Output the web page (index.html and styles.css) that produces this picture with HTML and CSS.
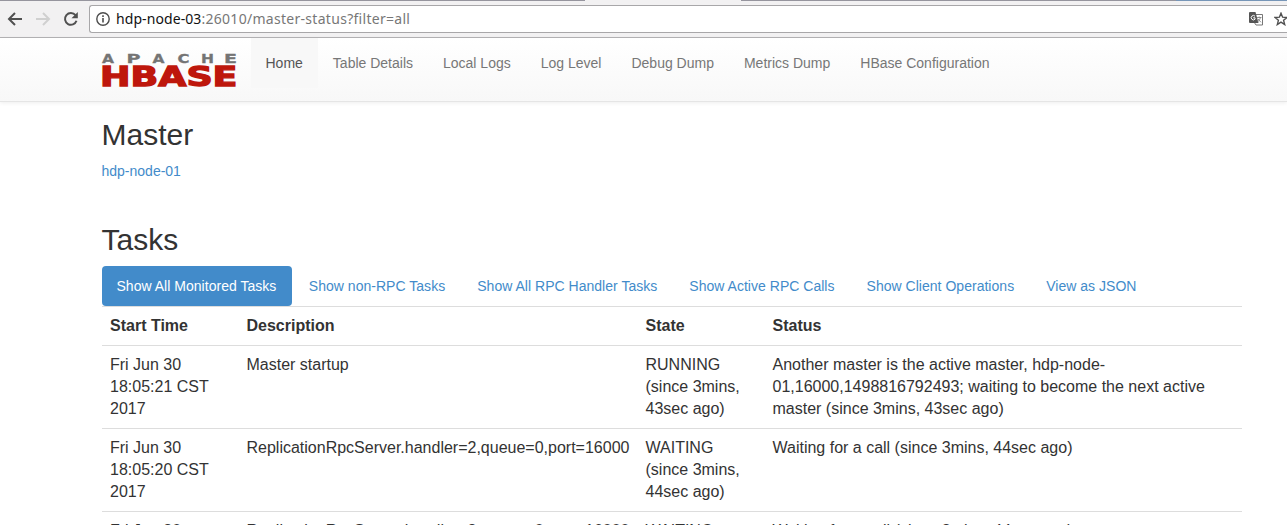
FILE: index.html
```
<!DOCTYPE html>
<html lang="en">
<head>
<meta charset="utf-8">
<title>Master: hdp-node-03</title>
<link rel="stylesheet" href="styles.css">
</head>
<body>
<div class="browser">
  <div class="tabstrip"><i class="edge left"></i><i class="edge mid"></i><i class="edge right"></i></div>
  <div class="toolbar">
    <svg class="controls" width="89" height="34" viewBox="0 3 89 34" fill="none" stroke-width="2">
      <path d="M22 19H9.500M15 13L9 19L15 25" stroke="#505050"/>
      <path d="M36 19H48.500M43 13L49 19L43 25" stroke="#d0d0d0"/>
      <path d="M75.500 15.200A5.900 5.900 0 1 0 76.500 20.800" stroke="#505050"/>
      <path d="M77.800 12V18.300H71.500Z" fill="#505050"/>
    </svg>
    <div class="address">
      <svg width="14" height="14" viewBox="0 0 14 14" fill="none" stroke="#4d4d4d"><circle cx="7" cy="7" r="6.200" stroke-width="1.400"/><path d="M7 6V10.500M7 3.300V4.900" stroke-width="1.600"/></svg>
      <span class="url"><b>hdp-node-03</b>:26010/master-status?filter=all</span>
      <svg class="translate" width="14" height="14" viewBox="0 0 14 14"><path d="M6 2.500H13.500V13H7L5 10" fill="#fff" stroke="#777"/><path d="M1 0H6.500L9.500 11H1Q0 11 0 10V1Q0 0 1 0Z" fill="#555"/><path d="M6 4.200A2.200 2.200 0 1 0 6 7.200V5.800H4.200" fill="none" stroke="#fff"/><path d="M8 5.500H12.500M10.200 4.500V5.500M11.500 5.500Q11 8 8.500 10M9 7L12 10.300" fill="none" stroke="#777" stroke-width=".8"/></svg>
      <svg class="star" width="14" height="14" viewBox="0 0 14 14"><path d="M7 1.200L8.600 5.200L13 5.500L9.600 8.300L10.700 12.600L7 10.200L3.300 12.600L4.400 8.300L1 5.500L5.400 5.200Z" fill="none" stroke="#505050" stroke-width="1.400"/></svg>
    </div>
  </div>
</div>
<header class="navbar">
  <div class="container nav">
    <svg class="logo" width="135" height="34" viewBox="0 0 135 34">
      <g class="apache"><text x="0" y="9.500" textLength="12" lengthAdjust="spacingAndGlyphs">A</text><text x="24.500" y="9.500" textLength="14" lengthAdjust="spacingAndGlyphs">P</text><text x="50.500" y="9.500" textLength="12" lengthAdjust="spacingAndGlyphs">A</text><text x="75.500" y="9.500" textLength="12" lengthAdjust="spacingAndGlyphs">C</text><text x="99" y="9.500" textLength="13" lengthAdjust="spacingAndGlyphs">H</text><text x="122" y="9.500" textLength="13" lengthAdjust="spacingAndGlyphs">E</text></g>
      <text class="hbase" x="-2" y="32.500" textLength="137.500" lengthAdjust="spacingAndGlyphs">HBASE</text>
    </svg>
    <nav class="links"><a class="current">Home</a><a>Table Details</a><a>Local Logs</a><a>Log Level</a><a>Debug Dump</a><a>Metrics Dump</a><a>HBase Configuration</a></nav>
  </div>
</header>
<main class="container">
  <h1>Master</h1>
  <p class="host"><a>hdp-node-01</a></p>
  <h2>Tasks</h2>
  <div class="pills"><a class="active">Show All Monitored Tasks</a><a>Show non-RPC Tasks</a><a>Show All RPC Handler Tasks</a><a>Show Active RPC Calls</a><a>Show Client Operations</a><a>View as JSON</a></div>
  <table>
    <colgroup><col class="c1"><col class="c2"><col class="c3"><col></colgroup>
    <tr><th>Start Time</th><th>Description</th><th>State</th><th>Status</th></tr>
    <tr><td>Fri Jun 30<br>18:05:21 CST<br>2017</td><td>Master startup</td><td>RUNNING<br>(since 3mins,<br>43sec ago)</td><td>Another master is the active master, hdp-node-<br>01,16000,1498816792493; waiting to become the next active<br>master (since 3mins, 43sec ago)</td></tr>
    <tr><td>Fri Jun 30<br>18:05:20 CST<br>2017</td><td>ReplicationRpcServer.handler=2,queue=0,port=16000</td><td>WAITING<br>(since 3mins,<br>44sec ago)</td><td>Waiting for a call (since 3mins, 44sec ago)</td></tr>
    <tr><td>Fri Jun 30</td><td>ReplicationRpcServer.handler=2,queue=0,port=16000</td><td>WAITING</td><td>Waiting for a call (since 3mins, 44sec ago)</td></tr>
  </table>
</main>
</body>
</html>
```
FILE: styles.css
```
* { box-sizing: border-box; }
html, body { height: 525px; overflow: hidden; }
body { margin: 0; background: #fff; color: #333; font: 14px/20px "Liberation Sans", Arial, sans-serif; }
.browser { height: 38px; background: #f2f1f2; border-bottom: 1px solid #b4b3b5; }
.tabstrip { display: flex; height: 1px; }
.edge { height: 1px; background: #96959e; }
.edge.left { width: 585px; }
.edge.mid { width: 156px; background: #f2f1f2; }
.edge.right { flex: 1; background: linear-gradient(90deg, #96959e 435px, #7796b8 435px); }
.toolbar { display: flex; height: 36px; }
.controls { flex: none; margin-top: 2px; }
.address { display: flex; flex: 1; align-items: center; height: 28px; margin-top: 4px; padding-left: 6px; background: #fff; border: 1px solid #a8a7a9; border-right: 0; border-radius: 3px 0 0 3px; }
.url { margin-left: 6px; color: #777; font: 14px/20px "Noto Sans", sans-serif; letter-spacing: .29px; white-space: nowrap; }
.url b { color: #111; font-weight: 400; letter-spacing: .08px; }
.translate { margin-left: auto; }
.star { margin: 0 -1px 0 11px; flex: none; }
.navbar { height: 64px; background: linear-gradient(#fff, #f8f8f8); border-bottom: 1px solid #e5e5e5; box-shadow: 0 1px 4px rgba(0,0,0,.07); }
.container { width: 1140px; margin-left: 102px; }
.nav { display: flex; }
.logo { margin: 14.500px 13.500px 0 0; overflow: visible; }
.apache { fill: #747474; stroke: #747474; stroke-width: .3px; font: bold 12.500px "DejaVu Sans", sans-serif; }
.hbase { fill: #be170c; stroke: #be170c; stroke-width: 1.300px; font: bold 27px "DejaVu Sans", sans-serif; }
.links { display: flex; }
.links a { height: 50px; padding: 15px; color: #777; }
.links .current { color: #555; background: #f8f8f8; }
h1, h2 { margin: 0 0 0 -.5px; font-size: 30px; line-height: 34px; font-weight: 500; }
h1 { padding-top: 16px; }
.host { margin: 9px 0 42px -.5px; }
a { color: #428bca; }
.pills { display: flex; gap: 2px; margin-top: 9px; }
.pills a { height: 40px; padding: 10px 15px; border-radius: 4px; letter-spacing: .024px; }
.pills .active { padding-left: 14.500px; padding-right: 15.500px; color: #fff; background: #428bca; }
table { width: 1140px; table-layout: fixed; border-collapse: separate; border-spacing: 0; font-size: 16px; line-height: 22px; }
.c1 { width: 136.500px; }
.c2 { width: 399px; }
.c3 { width: 127px; }
th, td { padding: 8px; border-top: 1px solid #ddd; text-align: left; vertical-align: top; white-space: nowrap; }
```
